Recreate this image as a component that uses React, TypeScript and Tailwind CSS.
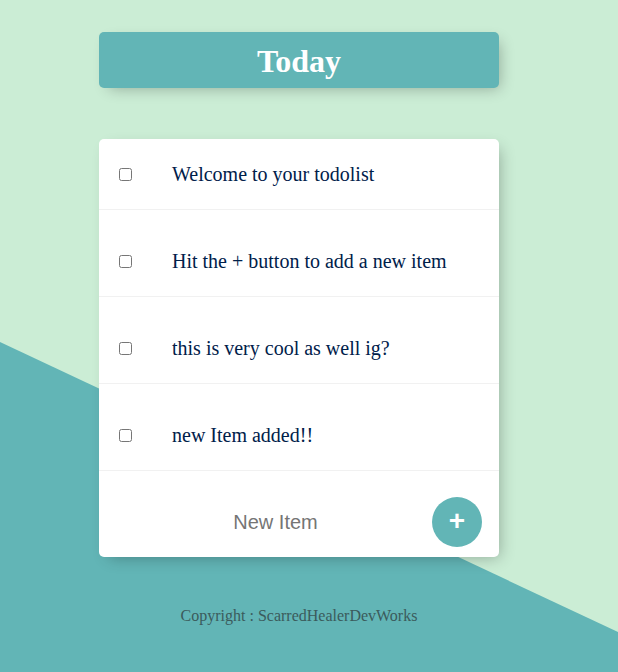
import React from 'react';

const items = [
  'Welcome to your todolist',
  'Hit the + button to add a new item',
  'this is very cool as well ig?',
  'new Item added!!',
];

const App = () => {
  return (
    <div className="relative h-screen min-h-[672px] overflow-hidden bg-[#cbedd5] font-['Liberation_Serif',serif]">
      {/* diagonal teal backdrop */}
      <div className="pointer-events-none absolute inset-0 bg-[#62b5b6] [clip-path:polygon(0_342px,100%_632px,100%_100%,0_100%)]"></div>

      <div className="relative ml-[99px] w-[400px] pt-[32px]">
        <div className="flex h-[56px] items-center justify-center rounded-[5px] bg-[#62b5b6] pt-[2px] shadow-[5px_5px_15px_-5px_rgba(0,0,0,0.3)]">
          <h1 className="text-[32px] font-bold leading-none text-white">Today</h1>
        </div>

        <div className="mt-[51px] rounded-[5px] bg-white shadow-[5px_5px_15px_-5px_rgba(0,0,0,0.3)]">
          {items.map((text, i) => (
            <div
              key={text}
              className={
                i === 0
                  ? 'flex h-[71px] items-center border-b border-[#f1f1f1]'
                  : 'flex h-[87px] items-center border-b border-[#f1f1f1] pt-[16px]'
              }
            >
              <input type="checkbox" className="m-0 ml-[20px] h-[13px] w-[13px] shrink-0" />
              <p className="m-0 pl-[40px] text-[20px] text-[#00204a]">{text}</p>
            </div>
          ))}

          <div className="flex h-[86px] items-center pt-[16px]">
            <input
              type="text"
              placeholder="New Item"
              className="ml-[10px] box-content h-[60px] w-[313px] border-none pl-[10px] text-center font-['Liberation_Sans',sans-serif] text-[20px] text-[#00204a] outline-none placeholder:text-[#757575]"
            />
            <button className="ml-auto mr-[17px] flex h-[50px] w-[50px] items-center justify-center rounded-full bg-[#62b5b6] pb-[2px] font-['Liberation_Sans',sans-serif] text-[28px] font-bold leading-none text-white">
              +
            </button>
          </div>
        </div>

        <footer className="mt-[47px] text-center text-[16px] text-[#3b5b5c]">
          Copyright : ScarredHealerDevWorks
        </footer>
      </div>
    </div>
  );
};

export default App;
